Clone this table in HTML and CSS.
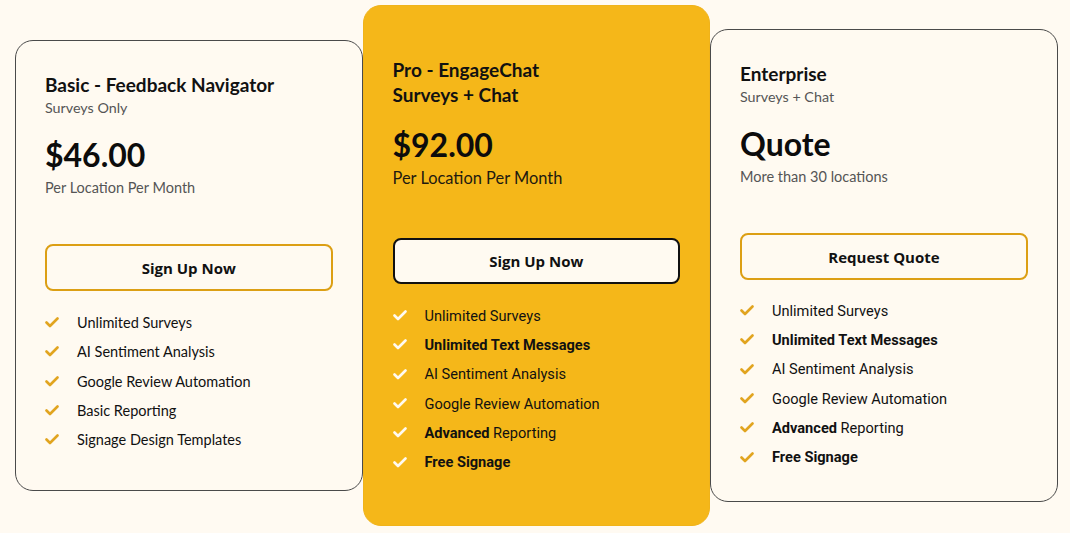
FILE: index.html
```html
<!DOCTYPE html>
<html>
<head>
<meta charset="utf-8">
<link rel="stylesheet" href="styles.css">
</head>
<body>
<svg width="0" height="0" style="position:absolute">
  <defs>
    <symbol id="chk" viewBox="0 0 14 11"><polyline points="1.5,5.5 5,9 12.5,1.5" fill="none" stroke="currentColor" stroke-width="2.6" stroke-linecap="round" stroke-linejoin="round"/></symbol>
  </defs>
</svg>
<main class="plans">
  <section class="card card-basic">
    <h2 class="title">Basic - Feedback Navigator</h2>
    <p class="sub">Surveys Only</p>
    <p class="price">$46.00</p>
    <p class="per">Per Location Per Month</p>
    <a class="btn">Sign Up Now</a>
    <ul class="features lato">
      <li><svg class="ck"><use href="#chk"/></svg><span>Unlimited Surveys</span></li>
      <li><svg class="ck"><use href="#chk"/></svg><span>AI Sentiment Analysis</span></li>
      <li><svg class="ck"><use href="#chk"/></svg><span>Google Review Automation</span></li>
      <li><svg class="ck"><use href="#chk"/></svg><span>Basic Reporting</span></li>
      <li><svg class="ck"><use href="#chk"/></svg><span>Signage Design Templates</span></li>
    </ul>
  </section>
  <section class="card card-pro">
    <h2 class="title">Pro - EngageChat<br>Surveys + Chat</h2>
    <p class="price">$92.00</p>
    <p class="per">Per Location Per Month</p>
    <a class="btn">Sign Up Now</a>
    <ul class="features">
      <li><svg class="ck"><use href="#chk"/></svg><span>Unlimited Surveys</span></li>
      <li><svg class="ck"><use href="#chk"/></svg><span><b>Unlimited Text Messages</b></span></li>
      <li><svg class="ck"><use href="#chk"/></svg><span>AI Sentiment Analysis</span></li>
      <li><svg class="ck"><use href="#chk"/></svg><span>Google Review Automation</span></li>
      <li><svg class="ck"><use href="#chk"/></svg><span><b>Advanced</b> Reporting</span></li>
      <li><svg class="ck"><use href="#chk"/></svg><span><b>Free Signage</b></span></li>
    </ul>
  </section>
  <section class="card card-ent">
    <h2 class="title">Enterprise</h2>
    <p class="sub">Surveys + Chat</p>
    <p class="price">Quote</p>
    <p class="per">More than 30 locations</p>
    <a class="btn">Request Quote</a>
    <ul class="features">
      <li><svg class="ck"><use href="#chk"/></svg><span>Unlimited Surveys</span></li>
      <li><svg class="ck"><use href="#chk"/></svg><span><b>Unlimited Text Messages</b></span></li>
      <li><svg class="ck"><use href="#chk"/></svg><span>AI Sentiment Analysis</span></li>
      <li><svg class="ck"><use href="#chk"/></svg><span>Google Review Automation</span></li>
      <li><svg class="ck"><use href="#chk"/></svg><span><b>Advanced</b> Reporting</span></li>
      <li><svg class="ck"><use href="#chk"/></svg><span><b>Free Signage</b></span></li>
    </ul>
  </section>
</main>
</body>
</html>
```
FILE: styles.css
```css
html, body {
  margin: 0;
  padding: 0;
  background: #fffaf2;
}
body {
  width: 1070px;
  height: 533px;
  overflow: hidden;
  font-family: "Lato", "Noto Sans", sans-serif;
  color: #111;
}
.plans {
  display: flex;
  align-items: center;
  height: 531px;
  padding-left: 15px;
}
.card {
  box-sizing: border-box;
  width: 347.5px;
  background: #fffaf1;
  border: 1px solid #4a4a4a;
  border-radius: 18px;
  padding: 31px 29px 0 29px;
  display: flex;
  flex-direction: column;
}
.card-basic { height: 451px; }
.card-ent { height: 473px; padding-top: 31px; width: 348px; }
.card-pro {
  position: relative;
  z-index: 2;
  height: 521px;
  background: #f5b719;
  border-color: #f0b31a;
  padding-top: 51px;
}
.title {
  margin: 0;
  font-size: 19px;
  line-height: 25px;
  font-weight: 700;
  color: #111;
}
.sub {
  margin: 0;
  font-size: 14.3px;
  line-height: 22px;
  color: #555;
}
.price {
  margin: 14px 0 0;
  font-size: 32px;
  line-height: 44px;
  font-weight: 700;
  color: #0c0c0c;
}
.card-pro .price { margin-top: 16px; }
.per {
  margin: 0;
  font-size: 14.5px;
  line-height: 22px;
  color: #555;
}
.card-pro .per {
  font-size: 16.4px;
  color: #1e1a10;
}
.btn {
  box-sizing: border-box;
  display: flex;
  align-items: center;
  justify-content: center;
  margin-top: 45px;
  height: 47px;
  border: 2px solid #dc9f14;
  border-radius: 8px;
  font-family: "Open Sans", sans-serif;
  font-weight: 700;
  font-size: 15px;
  color: #111;
  background: #fffaf1;
}
.card-pro .btn {
  border-color: #111;
  height: 46px;
  margin-top: 49px;
}
.features {
  list-style: none;
  margin: 17px 0 0;
  padding: 0;
  font-family: "Roboto", sans-serif;
  font-size: 14.6px;
  color: #111;
}
.card-ent .features { margin-top: 16px; }
.features.lato { font-family: "Lato", sans-serif; font-size: 14.5px; }
.features li {
  display: flex;
  align-items: center;
  height: 29.3px;
}
.features b { font-weight: 700; }
.ck {
  width: 14px;
  height: 11px;
  color: #e1a41f;
  margin-right: 18px;
  flex: none;
}
.card-pro .ck { color: #fffaf1; }
```
